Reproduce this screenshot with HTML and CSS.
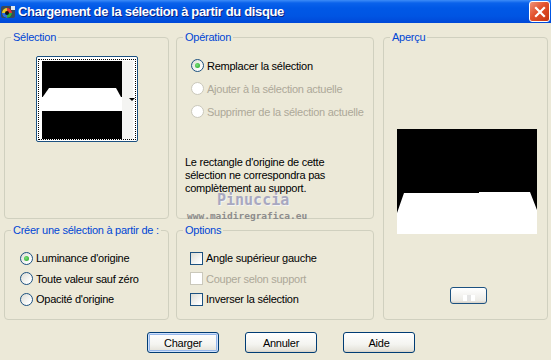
FILE: index.html
```html
<!DOCTYPE html>
<html lang="fr">
<head>
  <meta charset="UTF-8" />
  <title>Chargement de la sélection à partir du disque</title>
  <link rel="stylesheet" href="styles.css">
</head>
<body>

<div class="window">
  <!-- Title bar -->
  <div class="titlebar">
    <svg class="app-icon" width="16" height="16" viewBox="0 0 16 16">
      <rect x="1" y="2" width="14" height="12" rx="2" fill="#3b4a5a"/>
      <circle cx="7" cy="9" r="5" fill="#1a1a1a"/>
      <path d="M7 4 A5 5 0 0 1 12 9 L7 9 Z" fill="#e23b3b"/>
      <path d="M12 9 A5 5 0 0 1 7 14 L7 9 Z" fill="#2fae3a"/>
      <path d="M7 14 A5 5 0 0 1 2 9 L7 9 Z" fill="#2e6fe0"/>
      <path d="M2 9 A5 5 0 0 1 7 4 L7 9 Z" fill="#e8c82e"/>
      <circle cx="7" cy="9" r="2" fill="#111"/>
      <rect x="11" y="2" width="4" height="4" fill="#dfe8f0"/>
    </svg>
    <div class="title">Chargement de la sélection à partir du disque</div>
    <div class="close-btn">
      <svg width="12" height="12" viewBox="0 0 12 12">
        <path d="M2 2 L10 10 M10 2 L2 10" stroke="#fff" stroke-width="2.2" stroke-linecap="square"/>
      </svg>
    </div>
  </div>

  <div class="content">
    <div class="panes">

      <fieldset class="group group-selection">
        <legend>Sélection</legend>
        <div class="thumb">
          <div class="thumb-inner">
            <svg width="80" height="78" viewBox="0 0 80 78">
              <rect width="80" height="78" fill="#000"/>
              <polygon points="7,27 74,27 79,36 79,50 0,50 0,37" fill="#fff"/>
              <rect x="0" y="36" width="80" height="14" fill="#fff"/>
            </svg>
            <div class="thumb-side"><span class="arrow"></span></div>
          </div>
        </div>
      </fieldset>

      <fieldset class="group group-operation">
        <legend>Opération</legend>
        <div class="option-list op-list">
          <div class="option"><span class="radio checked"></span>Remplacer la sélection</div>
          <div class="option disabled"><span class="radio"></span>Ajouter à la sélection actuelle</div>
          <div class="option disabled"><span class="radio"></span>Supprimer de la sélection actuelle</div>
        </div>
        <p class="note">Le rectangle d'origine de cette<br>sélection ne correspondra pas<br>complètement au support.</p>
      </fieldset>

      <fieldset class="group group-preview">
        <legend>Aperçu</legend>
        <div class="preview">
          <svg width="140" height="105" viewBox="0 0 140 105">
            <rect width="140" height="105" fill="#000"/>
            <polygon points="7,64 82,64 82,63 133,63 140,81 140,105 0,105 0,84" fill="#fff"/>
          </svg>
        </div>
        <div class="mini-btn"><span class="mini-img"></span></div>
      </fieldset>

      <fieldset class="group group-source">
        <legend>Créer une sélection à partir de :</legend>
        <div class="option-list">
          <div class="option"><span class="radio checked"></span>Luminance d'origine</div>
          <div class="option"><span class="radio"></span>Toute valeur sauf zéro</div>
          <div class="option"><span class="radio"></span>Opacité d'origine</div>
        </div>
      </fieldset>

      <fieldset class="group group-options">
        <legend>Options</legend>
        <div class="option-list">
          <div class="option"><span class="check"></span>Angle supérieur gauche</div>
          <div class="option disabled"><span class="check"></span>Couper selon support</div>
          <div class="option"><span class="check"></span>Inverser la sélection</div>
        </div>
      </fieldset>

      <!-- watermark over the dialog -->
      <div class="watermark">
        <div class="wm-name">Pinuccia</div>
        <div class="wm-url">www.maidiregrafica.eu</div>
      </div>
    </div>

    <div class="buttons">
      <button class="btn default">Charger</button>
      <button class="btn">Annuler</button>
      <button class="btn">Aide</button>
    </div>
  </div>
</div>

</body>
</html>
```

FILE: styles.css
```css
body {
  margin: 0;
  font-family: 'Liberation Sans', Arial, sans-serif;
  font-size: 11px;
  letter-spacing: -0.25px;
  color: #000;
  background-color: #ece9d8;
}

.window {
  width: 551px;
  height: 360px;
  background-color: #ece9d8;
  overflow: hidden;
}

/* Title bar */
.titlebar {
  height: 23px;
  display: flex;
  align-items: center;
  padding-right: 1px;
  background: linear-gradient(#3d8cf7 0, #0a62eb 3px, #0058e6 8px, #0055e3 16px, #0048d8 23px);
}

.app-icon {
  flex: none;
}

.title {
  flex: 1;
  margin-left: 2px;
  color: #fff;
  font-weight: bold;
  font-size: 13px;
  letter-spacing: -0.35px;
  text-shadow: 1px 1px 0 #0a1f80;
  white-space: nowrap;
}

.close-btn {
  width: 19px;
  height: 19px;
  border: 1px solid #fff;
  border-radius: 3px;
  background: linear-gradient(135deg, #f0937a, #e2512d 45%, #c8350f);
  display: flex;
  align-items: center;
  justify-content: center;
}

/* Dialog body */
.content {
  padding: 8px 0 0 4px;
}

.panes {
  position: relative;
  display: grid;
  grid-template-columns: 165px 198px 167px;
  grid-template-rows: 188px 96px;
  column-gap: 7px;
  row-gap: 5px;
}

.group {
  margin: 0;
  padding: 0;
  min-width: 0;
  border: 1px solid #d0d0bf;
  border-radius: 4px;
  box-sizing: border-box;
}

.group legend {
  margin-left: 6px;
  padding: 0 2px;
  line-height: 13px;
  color: #0046d5;
  white-space: nowrap;
}

.group-selection { grid-column: 1; grid-row: 1; }
.group-operation { grid-column: 2; grid-row: 1; }
.group-preview   { grid-column: 3; grid-row: 1 / span 2; margin-left: 2px; }
.group-source    { grid-column: 1; grid-row: 2; }
.group-options   { grid-column: 2; grid-row: 2; }

/* Selection thumbnail */
.thumb {
  width: 100px;
  height: 84px;
  margin: 12px auto 0;
  border: 1px solid #1c5180;
  border-radius: 2px;
  background: #fff;
  display: flex;
  align-items: center;
  justify-content: center;
}

.thumb-inner {
  display: flex;
  padding: 1px 2px 0 3px;
  outline: 1px dotted #000;
}

.thumb-inner svg {
  display: block;
}

.thumb-side {
  width: 11px;
  background: #f4f4f2;
  position: relative;
}

.arrow {
  position: absolute;
  left: 7px;
  top: 37px;
  border-left: 3px solid transparent;
  border-right: 3px solid transparent;
  border-top: 3px solid #000;
}

/* Radio / checkbox lists */
.option-list {
  padding: 11px 0 0 15px;
}

.op-list {
  padding: 10px 0 0 14px;
}

.op-list .option {
  height: 23px;
}

.option {
  display: flex;
  align-items: center;
  height: 20.5px;
  white-space: nowrap;
}

.option.disabled {
  color: #aca899;
}

.radio {
  flex: none;
  position: relative;
  width: 13px;
  height: 13px;
  margin-right: 3px;
  border: 1px solid #1c5180;
  border-radius: 50%;
  box-sizing: border-box;
  background: linear-gradient(135deg, #dcdcd4, #fff 80%);
}

.radio.checked::after {
  content: "";
  position: absolute;
  left: 3px;
  top: 3px;
  width: 5px;
  height: 5px;
  border-radius: 50%;
  background: radial-gradient(circle at 40% 40%, #7ae07a, #21a121);
}

.disabled .radio {
  border-color: #cac8bb;
  background: #fff;
}

.group-options .option-list {
  padding-left: 13px;
}

.check {
  flex: none;
  width: 13px;
  height: 13px;
  margin-right: 3px;
  border: 1px solid #1c5180;
  box-sizing: border-box;
  background: linear-gradient(135deg, #dcdcd4, #fff 85%);
}

.disabled .check {
  border-color: #cac8bb;
  background: #fff;
}

.note {
  margin: 33px 0 0 8px;
  line-height: 13px;
}

/* Preview */
.preview {
  width: 140px;
  margin: 85px 0 0 13px;
}

.preview svg {
  display: block;
}

.mini-btn {
  width: 35px;
  height: 15px;
  margin: 53px 0 0 66px;
  border: 1px solid #1c5180;
  border-radius: 3px;
  background: linear-gradient(#fff, #ecebe6 85%, #d6d0c5);
  display: flex;
  align-items: flex-end;
  justify-content: center;
}

.mini-img {
  width: 12px;
  height: 6px;
  margin-bottom: 2px;
  background: linear-gradient(90deg, #fff 0 4px, #e4e4e4 4px 8px, #fff 8px);
}

/* Watermark */
.watermark {
  position: absolute;
  left: 183px;
  top: 163px;
  pointer-events: none;
  letter-spacing: 0;
}

.wm-name {
  margin-left: 30px;
  font-family: 'DejaVu Sans Mono', monospace;
  font-size: 15px;
  font-weight: bold;
  line-height: 12px;
  color: #a8a8c0;
  text-shadow: 1px 1px 0 #f4f4f4;
}

.wm-url {
  margin-top: 5px;
  font-family: 'DejaVu Sans Mono', monospace;
  font-size: 9.5px;
  line-height: 10px;
  font-weight: bold;
  color: #8c8c8c;
}

/* Bottom buttons */
.buttons {
  display: flex;
  gap: 26px;
  padding: 12px 0 0 143px;
}

.btn {
  width: 72px;
  height: 21px;
  padding: 0;
  font-family: 'Liberation Sans', Arial, sans-serif;
  font-size: 11px;
  letter-spacing: -0.25px;
  color: #000;
  border: 1px solid #003c74;
  border-radius: 3px;
  background: linear-gradient(#fff, #f4f4f0 60%, #e6e4dc 90%, #d6d0c5);
}

.btn.default {
  box-shadow: inset 0 0 0 1px #cee0fb, inset 0 0 0 2px #95b6ea;
}
```
